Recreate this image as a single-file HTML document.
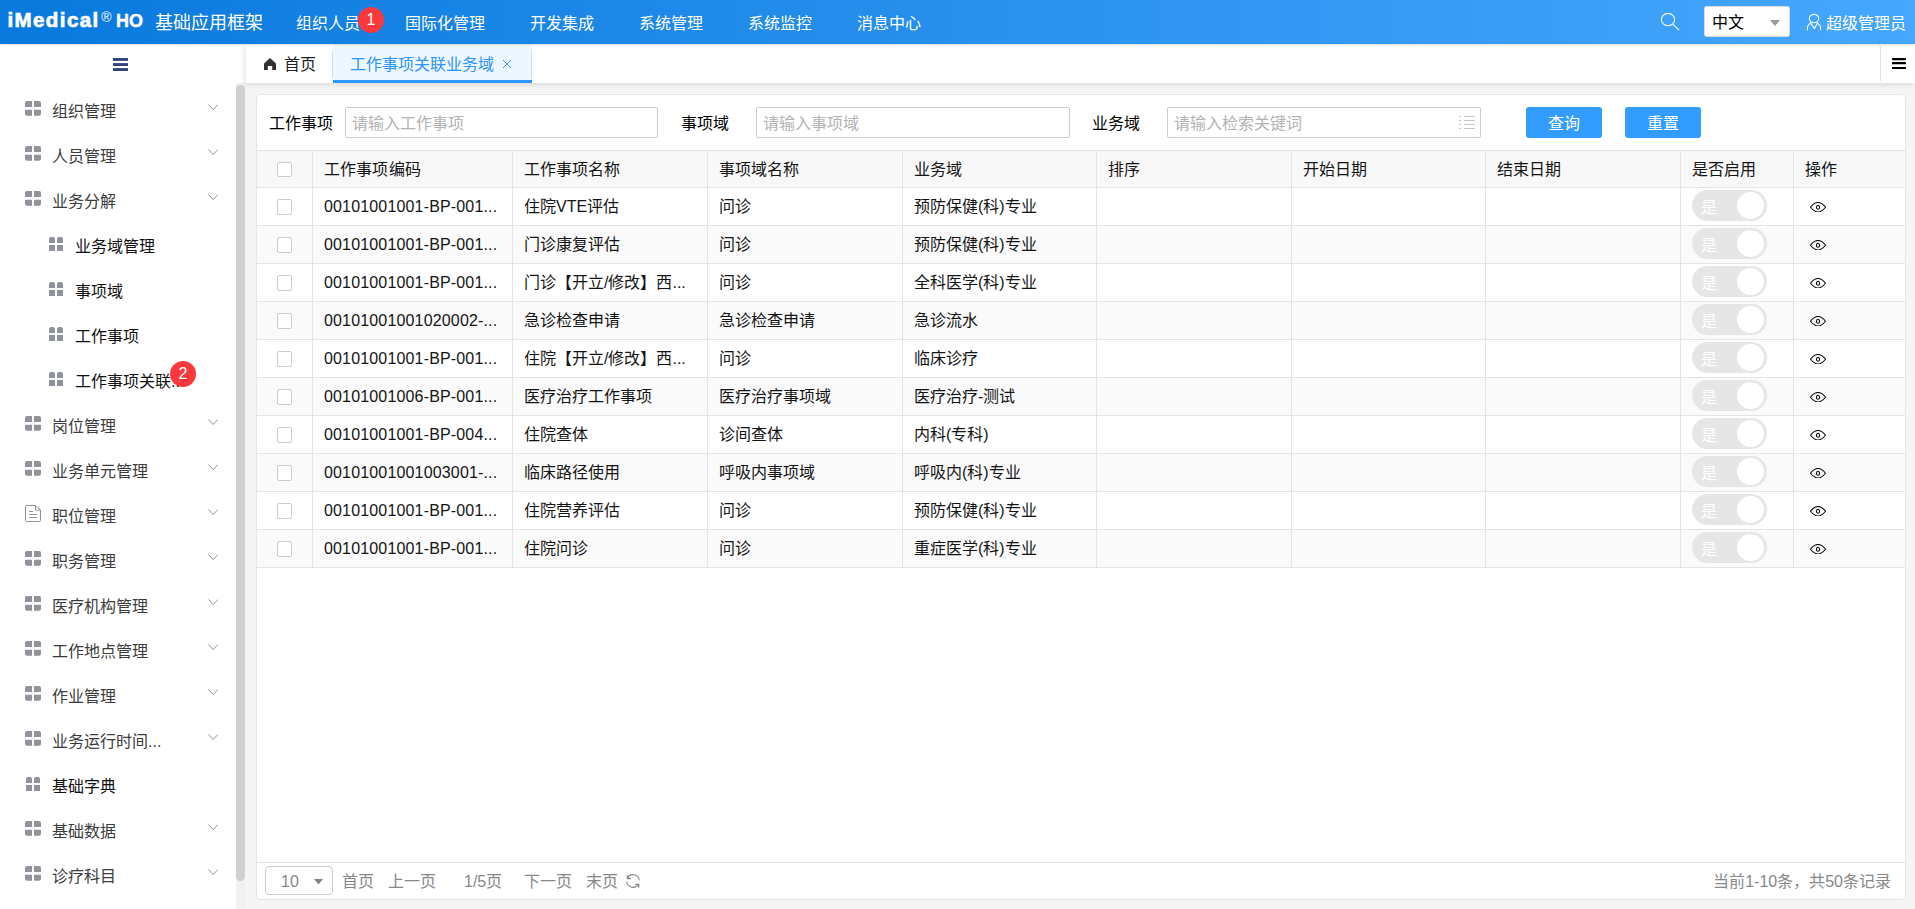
<!DOCTYPE html>
<html lang="zh-CN">
<head>
<meta charset="utf-8">
<title>iMedical HO</title>
<style>
*{box-sizing:border-box;margin:0;padding:0}
html,body{width:1915px;height:909px;overflow:hidden}
body{font-family:"Liberation Sans",sans-serif;font-size:16px;color:#000;background:#f5f5f5;position:relative}
.abs{position:absolute}
/* header */
#hdr{position:absolute;left:0;top:0;width:1915px;height:44px;background:linear-gradient(90deg,#0979dd,#46a7fe);box-shadow:0 1px 2px rgba(0,0,0,.13);z-index:5;color:#fff}
#hdr .t{position:absolute;white-space:nowrap;line-height:20px}
.nav{font-size:16px;top:13.5px}
/* sidebar */
#side{position:absolute;left:0;top:44px;width:236px;height:865px;background:#fff}
#side2{position:absolute;left:236px;top:44px;width:10px;height:39px;background:#fff}
#strack{position:absolute;left:236px;top:83px;width:9px;height:826px;background:#f1f1f1}
#sthumb{position:absolute;left:236px;top:85px;width:9px;height:796px;background:#d0d0d0;border-radius:5px}
.mi{position:absolute;left:0;width:236px;height:45px}
.mi .ic{position:absolute;left:25px;top:13px}
.mi .tx{position:absolute;left:52px;top:14.2px;line-height:20px;white-space:nowrap;color:#3c3c3c}
.mi.sub .tx,.mi.leaf .tx{color:#111}
.mi.leaf .ic{left:26px;top:14px}
.mi .ch{position:absolute;left:208px;top:15.5px}
.mi.sub .ic{left:49px;top:14px}
.mi.sub .tx{left:75px}
/* tabs */
#tabs{position:absolute;left:246px;top:44px;width:1669px;height:39px;background:#fff;box-shadow:-2px 2px 5px rgba(0,0,0,.10);border-top-left-radius:3px}
/* panel */
#panel{position:absolute;left:256px;top:94px;width:1650px;height:806px;background:#fff;border:1px solid #e6e6e6;border-radius:5px}
.lbl{position:absolute;top:114px;line-height:20px;white-space:nowrap}
.inp{position:absolute;top:107px;height:31px;border:1px solid #ccc;border-radius:2px;background:#fff;color:#b3b3b3;line-height:31px;padding-left:6px;white-space:nowrap}
.btn{position:absolute;top:107px;width:76px;height:31px;background:#339dff;border-radius:3px;color:#fff;text-align:center;line-height:33px}
/* table */
#tbl{position:absolute;left:257px;top:150px;width:1648px;color:#141414}
.row{position:absolute;left:0;width:1648px;height:38px;border-bottom:1px solid #e4e4e4;background:#fff}
.row.z{background:#fafafa}
.row.h{height:38px;border-top:1px solid #e4e4e4;background:#f8f8f8}
.c{position:absolute;top:0;height:100%;border-left:1px solid #e4e4e4;padding-left:11px;white-space:nowrap;overflow:hidden;line-height:38px}
.c0{left:0;width:55px;border-left:none;padding:0}
.c1{left:55px;width:200px;letter-spacing:.16px}
.c2{left:255px;width:195px}
.c3{left:450px;width:195px}
.c4{left:645px;width:194px}
.c5{left:839px;width:195px}
.c6{left:1034px;width:194px}
.c7{left:1228px;width:195px}
.c8{left:1423px;width:113px}
.c9{left:1536px;width:112px}
.cb{position:absolute;left:20px;top:11px;width:15px;height:15.6px;border:1px solid #ccc;border-radius:2px;background:#fff}
.sw{position:absolute;left:11px;top:2px;width:75px;height:31px;border-radius:16px;background:#e6e6e6}
.sw i{position:absolute;left:45px;top:1.6px;width:27.3px;height:27.4px;border-radius:14px;background:#fff}
.sw b{position:absolute;left:9px;top:0;line-height:35.6px;font-weight:normal;color:#fff;font-size:16px}
.eye{position:absolute;left:16px;top:13.6px}
/* footer */
#foot{position:absolute;left:257px;top:862px;width:1648px;height:37px;border-top:1px solid #e4e4e4;color:#888}
#foot .t{position:absolute;top:9px;line-height:20px;white-space:nowrap}
</style>
</head>
<body>
<!-- sidebar -->
<div id="side">
<svg class="abs" style="left:113px;top:14px" width="15" height="13" viewBox="0 0 15 13"><g fill="#30467a"><rect x="0" y="0" width="15" height="2.900"/><rect x="0" y="5.100" width="15" height="2.900"/><rect x="0" y="10.100" width="15" height="2.900"/></g></svg>
<div class="mi" style="top:44px"><svg class="ic" width="16" height="15" viewBox="0 0 16 15"><g fill="#8f939c"><path d="M2 0h5v6H0V2a2 2 0 0 1 2-2z"/><path d="M9 0h5a2 2 0 0 1 2 2v4H9z"/><path d="M0 8.800h7v5.900H2a2 2 0 0 1-2-2z"/><path d="M9 8.800h7v3.900a2 2 0 0 1-2 2H9z"/></g></svg><span class="tx">组织管理</span><svg class="ch" width="10.400" height="6" viewBox="0 0 11 6" preserveAspectRatio="none"><path d="M0.5 0.5l5 5 5-5" fill="none" stroke="#8a8f99" stroke-width="1"/></svg></div>
<div class="mi" style="top:89px"><svg class="ic" width="16" height="15" viewBox="0 0 16 15"><g fill="#8f939c"><path d="M2 0h5v6H0V2a2 2 0 0 1 2-2z"/><path d="M9 0h5a2 2 0 0 1 2 2v4H9z"/><path d="M0 8.800h7v5.900H2a2 2 0 0 1-2-2z"/><path d="M9 8.800h7v3.900a2 2 0 0 1-2 2H9z"/></g></svg><span class="tx">人员管理</span><svg class="ch" width="10.400" height="6" viewBox="0 0 11 6" preserveAspectRatio="none"><path d="M0.5 0.5l5 5 5-5" fill="none" stroke="#8a8f99" stroke-width="1"/></svg></div>
<div class="mi" style="top:134px"><svg class="ic" width="16" height="15" viewBox="0 0 16 15"><g fill="#8f939c"><path d="M2 0h5v6H0V2a2 2 0 0 1 2-2z"/><path d="M9 0h5a2 2 0 0 1 2 2v4H9z"/><path d="M0 8.800h7v5.900H2a2 2 0 0 1-2-2z"/><path d="M9 8.800h7v3.900a2 2 0 0 1-2 2H9z"/></g></svg><span class="tx">业务分解</span><svg class="ch" width="10.400" height="6" viewBox="0 0 11 6" preserveAspectRatio="none"><path d="M0.5 0.5l5 5 5-5" fill="none" stroke="#8a8f99" stroke-width="1"/></svg></div>
<div class="mi sub" style="top:179px"><svg class="ic" width="14" height="14" viewBox="0 0 14 14"><g fill="#8f939c"><path d="M0 6V2a2 2 0 0 1 2-2h2a2 2 0 0 1 2 2v4z"/><path d="M8 6V2a2 2 0 0 1 2-2h2a2 2 0 0 1 2 2v4z"/><path d="M0 8h6v6H0z"/><path d="M8 8h6v6H8z"/></g></svg><span class="tx">业务域管理</span></div>
<div class="mi sub" style="top:224px"><svg class="ic" width="14" height="14" viewBox="0 0 14 14"><g fill="#8f939c"><path d="M0 6V2a2 2 0 0 1 2-2h2a2 2 0 0 1 2 2v4z"/><path d="M8 6V2a2 2 0 0 1 2-2h2a2 2 0 0 1 2 2v4z"/><path d="M0 8h6v6H0z"/><path d="M8 8h6v6H8z"/></g></svg><span class="tx">事项域</span></div>
<div class="mi sub" style="top:269px"><svg class="ic" width="14" height="14" viewBox="0 0 14 14"><g fill="#8f939c"><path d="M0 6V2a2 2 0 0 1 2-2h2a2 2 0 0 1 2 2v4z"/><path d="M8 6V2a2 2 0 0 1 2-2h2a2 2 0 0 1 2 2v4z"/><path d="M0 8h6v6H0z"/><path d="M8 8h6v6H8z"/></g></svg><span class="tx">工作事项</span></div>
<div class="mi sub" style="top:314px"><svg class="ic" width="14" height="14" viewBox="0 0 14 14"><g fill="#8f939c"><path d="M0 6V2a2 2 0 0 1 2-2h2a2 2 0 0 1 2 2v4z"/><path d="M8 6V2a2 2 0 0 1 2-2h2a2 2 0 0 1 2 2v4z"/><path d="M0 8h6v6H0z"/><path d="M8 8h6v6H8z"/></g></svg><span class="tx">工作事项关联...</span></div>
<div class="mi" style="top:359px"><svg class="ic" width="16" height="15" viewBox="0 0 16 15"><g fill="#8f939c"><path d="M2 0h5v6H0V2a2 2 0 0 1 2-2z"/><path d="M9 0h5a2 2 0 0 1 2 2v4H9z"/><path d="M0 8.800h7v5.900H2a2 2 0 0 1-2-2z"/><path d="M9 8.800h7v3.900a2 2 0 0 1-2 2H9z"/></g></svg><span class="tx">岗位管理</span><svg class="ch" width="10.400" height="6" viewBox="0 0 11 6" preserveAspectRatio="none"><path d="M0.5 0.5l5 5 5-5" fill="none" stroke="#8a8f99" stroke-width="1"/></svg></div>
<div class="mi" style="top:404px"><svg class="ic" width="16" height="15" viewBox="0 0 16 15"><g fill="#8f939c"><path d="M2 0h5v6H0V2a2 2 0 0 1 2-2z"/><path d="M9 0h5a2 2 0 0 1 2 2v4H9z"/><path d="M0 8.800h7v5.900H2a2 2 0 0 1-2-2z"/><path d="M9 8.800h7v3.900a2 2 0 0 1-2 2H9z"/></g></svg><span class="tx">业务单元管理</span><svg class="ch" width="10.400" height="6" viewBox="0 0 11 6" preserveAspectRatio="none"><path d="M0.5 0.5l5 5 5-5" fill="none" stroke="#8a8f99" stroke-width="1"/></svg></div>
<div class="mi" style="top:449px"><svg class="ic" style="top:12px" width="16" height="17" viewBox="0 0 16 17"><g fill="none" stroke="#8d919b" stroke-width="1"><path d="M1.500 0.500h9l5 4.600v10.400a1 1 0 0 1-1 1h-13a1 1 0 0 1-1-1v-14a1 1 0 0 1 1-1z"/><path d="M10.500 0.500v4.600h5"/><path d="M4 6.500h4M4 9.500h8M4 12.500h8"/></g></svg><span class="tx">职位管理</span><svg class="ch" width="10.400" height="6" viewBox="0 0 11 6" preserveAspectRatio="none"><path d="M0.5 0.5l5 5 5-5" fill="none" stroke="#8a8f99" stroke-width="1"/></svg></div>
<div class="mi" style="top:494px"><svg class="ic" width="16" height="15" viewBox="0 0 16 15"><g fill="#8f939c"><path d="M2 0h5v6H0V2a2 2 0 0 1 2-2z"/><path d="M9 0h5a2 2 0 0 1 2 2v4H9z"/><path d="M0 8.800h7v5.900H2a2 2 0 0 1-2-2z"/><path d="M9 8.800h7v3.900a2 2 0 0 1-2 2H9z"/></g></svg><span class="tx">职务管理</span><svg class="ch" width="10.400" height="6" viewBox="0 0 11 6" preserveAspectRatio="none"><path d="M0.5 0.5l5 5 5-5" fill="none" stroke="#8a8f99" stroke-width="1"/></svg></div>
<div class="mi" style="top:539px"><svg class="ic" width="16" height="15" viewBox="0 0 16 15"><g fill="#8f939c"><path d="M2 0h5v6H0V2a2 2 0 0 1 2-2z"/><path d="M9 0h5a2 2 0 0 1 2 2v4H9z"/><path d="M0 8.800h7v5.900H2a2 2 0 0 1-2-2z"/><path d="M9 8.800h7v3.900a2 2 0 0 1-2 2H9z"/></g></svg><span class="tx">医疗机构管理</span><svg class="ch" width="10.400" height="6" viewBox="0 0 11 6" preserveAspectRatio="none"><path d="M0.5 0.5l5 5 5-5" fill="none" stroke="#8a8f99" stroke-width="1"/></svg></div>
<div class="mi" style="top:584px"><svg class="ic" width="16" height="15" viewBox="0 0 16 15"><g fill="#8f939c"><path d="M2 0h5v6H0V2a2 2 0 0 1 2-2z"/><path d="M9 0h5a2 2 0 0 1 2 2v4H9z"/><path d="M0 8.800h7v5.900H2a2 2 0 0 1-2-2z"/><path d="M9 8.800h7v3.900a2 2 0 0 1-2 2H9z"/></g></svg><span class="tx">工作地点管理</span><svg class="ch" width="10.400" height="6" viewBox="0 0 11 6" preserveAspectRatio="none"><path d="M0.5 0.5l5 5 5-5" fill="none" stroke="#8a8f99" stroke-width="1"/></svg></div>
<div class="mi" style="top:629px"><svg class="ic" width="16" height="15" viewBox="0 0 16 15"><g fill="#8f939c"><path d="M2 0h5v6H0V2a2 2 0 0 1 2-2z"/><path d="M9 0h5a2 2 0 0 1 2 2v4H9z"/><path d="M0 8.800h7v5.900H2a2 2 0 0 1-2-2z"/><path d="M9 8.800h7v3.900a2 2 0 0 1-2 2H9z"/></g></svg><span class="tx">作业管理</span><svg class="ch" width="10.400" height="6" viewBox="0 0 11 6" preserveAspectRatio="none"><path d="M0.5 0.5l5 5 5-5" fill="none" stroke="#8a8f99" stroke-width="1"/></svg></div>
<div class="mi" style="top:674px"><svg class="ic" width="16" height="15" viewBox="0 0 16 15"><g fill="#8f939c"><path d="M2 0h5v6H0V2a2 2 0 0 1 2-2z"/><path d="M9 0h5a2 2 0 0 1 2 2v4H9z"/><path d="M0 8.800h7v5.900H2a2 2 0 0 1-2-2z"/><path d="M9 8.800h7v3.900a2 2 0 0 1-2 2H9z"/></g></svg><span class="tx">业务运行时间...</span><svg class="ch" width="10.400" height="6" viewBox="0 0 11 6" preserveAspectRatio="none"><path d="M0.5 0.5l5 5 5-5" fill="none" stroke="#8a8f99" stroke-width="1"/></svg></div>
<div class="mi leaf" style="top:719px"><svg class="ic" width="14" height="14" viewBox="0 0 14 14"><g fill="#8f939c"><path d="M0 6V2a2 2 0 0 1 2-2h2a2 2 0 0 1 2 2v4z"/><path d="M8 6V2a2 2 0 0 1 2-2h2a2 2 0 0 1 2 2v4z"/><path d="M0 8h6v6H0z"/><path d="M8 8h6v6H8z"/></g></svg><span class="tx">基础字典</span></div>
<div class="mi" style="top:764px"><svg class="ic" width="16" height="15" viewBox="0 0 16 15"><g fill="#8f939c"><path d="M2 0h5v6H0V2a2 2 0 0 1 2-2z"/><path d="M9 0h5a2 2 0 0 1 2 2v4H9z"/><path d="M0 8.800h7v5.900H2a2 2 0 0 1-2-2z"/><path d="M9 8.800h7v3.900a2 2 0 0 1-2 2H9z"/></g></svg><span class="tx">基础数据</span><svg class="ch" width="10.400" height="6" viewBox="0 0 11 6" preserveAspectRatio="none"><path d="M0.5 0.5l5 5 5-5" fill="none" stroke="#8a8f99" stroke-width="1"/></svg></div>
<div class="mi" style="top:809px"><svg class="ic" width="16" height="15" viewBox="0 0 16 15"><g fill="#8f939c"><path d="M2 0h5v6H0V2a2 2 0 0 1 2-2z"/><path d="M9 0h5a2 2 0 0 1 2 2v4H9z"/><path d="M0 8.800h7v5.900H2a2 2 0 0 1-2-2z"/><path d="M9 8.800h7v3.900a2 2 0 0 1-2 2H9z"/></g></svg><span class="tx">诊疗科目</span><svg class="ch" width="10.400" height="6" viewBox="0 0 11 6" preserveAspectRatio="none"><path d="M0.5 0.5l5 5 5-5" fill="none" stroke="#8a8f99" stroke-width="1"/></svg></div>
<div class="abs" style="left:170px;top:317px;width:26px;height:26px;border-radius:13px;background:#fb383c;color:#fff;text-align:center;line-height:25px;font-size:16px">2</div>
</div>
<div id="side2"></div>
<div id="strack"></div>
<div id="sthumb"></div>
<!-- tabs -->
<div id="tabs">
<svg class="abs" style="left:18px;top:14px" width="12" height="12" viewBox="0 0 12 12"><path d="M6 0L12 5.400V12H8.200V8H3.800V12H0V5.400z" fill="#2f3033"/></svg>
<span class="abs" style="left:38px;top:11px;line-height:20px;color:#222">首页</span>
<div class="abs" style="left:86px;top:7px;width:1px;height:27px;background:#ddd"></div>
<div class="abs" style="left:87px;top:0;width:199px;height:39px;background:#ecf7ff;border-bottom:3px solid #2e98ff"></div>
<span class="abs" style="left:104px;top:11px;line-height:20px;color:#2c94fb;white-space:nowrap">工作事项关联业务域</span>
<svg class="abs" style="left:256px;top:15px" width="10" height="10" viewBox="0 0 10 10"><path d="M1 1l8 8M9 1l-8 8" stroke="#2e98ff" stroke-width="1" fill="none"/></svg>
<div class="abs" style="left:285px;top:7px;width:1px;height:27px;background:#ddd"></div>
<div class="abs" style="left:1625px;top:0;width:10px;height:37px;border-right:1px solid #e0e0e0;border-top-right-radius:4px"></div>
<svg class="abs" style="left:1646px;top:14px" width="14" height="11" viewBox="0 0 14 11"><g fill="#000"><rect x="0" y="0" width="14" height="2.200" rx="0.600"/><rect x="0" y="4.100" width="14" height="2.200" rx="0.600"/><rect x="0" y="8.900" width="14" height="2.200" rx="0.600"/></g></svg>
</div>
<!-- panel -->
<div id="panel"></div>
<span class="lbl" style="left:269px">工作事项</span>
<div class="inp" style="left:345px;width:313px">请输入工作事项</div>
<span class="lbl" style="left:681px">事项域</span>
<div class="inp" style="left:756px;width:314px">请输入事项域</div>
<span class="lbl" style="left:1092px">业务域</span>
<div class="inp" style="left:1167px;width:314px">请输入检索关键词<svg class="abs" style="left:291px;top:7px" width="17" height="15" viewBox="0 0 17 15"><g fill="none" stroke="#c3c7cf" stroke-width="1.2"><path d="M5 1.500h11M5 5.500h11M5 9.500h11M5 13.500h11"/><path d="M0 1.500h2M0 5.500h2M0 9.500h2M0 13.500h2"/></g></svg></div>
<div class="btn" style="left:1526px">查询</div>
<div class="btn" style="left:1625px">重置</div>

<div id="tbl">
<div class="row h" style="top:0"><div class="c c0"><span class="cb" style="top:11px;height:15px"></span></div><div class="c c1">工作事项编码</div><div class="c c2">工作事项名称</div><div class="c c3">事项域名称</div><div class="c c4">业务域</div><div class="c c5">排序</div><div class="c c6">开始日期</div><div class="c c7">结束日期</div><div class="c c8">是否启用</div><div class="c c9">操作</div></div>
<div class="row" style="top:38px"><div class="c c0"><span class="cb"></span></div><div class="c c1">00101001001-BP-001...</div><div class="c c2">住院VTE评估</div><div class="c c3">问诊</div><div class="c c4">预防保健(科)专业</div><div class="c c5"></div><div class="c c6"></div><div class="c c7"></div><div class="c c8"><span class="sw"><b>是</b><i></i></span></div><div class="c c9"><svg class="eye" width="16" height="10.5" viewBox="0 0 16 10.5"><g fill="none" stroke="#000" stroke-width="1.05"><path d="M0.500 5.250C3 2 5.200 0.550 8 0.550S13 2 15.500 5.250C13 8.500 10.800 9.950 8 9.950S3 8.500 0.500 5.250z"/><ellipse cx="8" cy="5.250" rx="1.550" ry="2.050"/></g></svg></div></div>
<div class="row z" style="top:76px"><div class="c c0"><span class="cb"></span></div><div class="c c1">00101001001-BP-001...</div><div class="c c2">门诊康复评估</div><div class="c c3">问诊</div><div class="c c4">预防保健(科)专业</div><div class="c c5"></div><div class="c c6"></div><div class="c c7"></div><div class="c c8"><span class="sw"><b>是</b><i></i></span></div><div class="c c9"><svg class="eye" width="16" height="10.5" viewBox="0 0 16 10.5"><g fill="none" stroke="#000" stroke-width="1.05"><path d="M0.500 5.250C3 2 5.200 0.550 8 0.550S13 2 15.500 5.250C13 8.500 10.800 9.950 8 9.950S3 8.500 0.500 5.250z"/><ellipse cx="8" cy="5.250" rx="1.550" ry="2.050"/></g></svg></div></div>
<div class="row" style="top:114px"><div class="c c0"><span class="cb"></span></div><div class="c c1">00101001001-BP-001...</div><div class="c c2">门诊【开立/修改】西...</div><div class="c c3">问诊</div><div class="c c4">全科医学(科)专业</div><div class="c c5"></div><div class="c c6"></div><div class="c c7"></div><div class="c c8"><span class="sw"><b>是</b><i></i></span></div><div class="c c9"><svg class="eye" width="16" height="10.5" viewBox="0 0 16 10.5"><g fill="none" stroke="#000" stroke-width="1.05"><path d="M0.500 5.250C3 2 5.200 0.550 8 0.550S13 2 15.500 5.250C13 8.500 10.800 9.950 8 9.950S3 8.500 0.500 5.250z"/><ellipse cx="8" cy="5.250" rx="1.550" ry="2.050"/></g></svg></div></div>
<div class="row z" style="top:152px"><div class="c c0"><span class="cb"></span></div><div class="c c1">00101001001020002-...</div><div class="c c2">急诊检查申请</div><div class="c c3">急诊检查申请</div><div class="c c4">急诊流水</div><div class="c c5"></div><div class="c c6"></div><div class="c c7"></div><div class="c c8"><span class="sw"><b>是</b><i></i></span></div><div class="c c9"><svg class="eye" width="16" height="10.5" viewBox="0 0 16 10.5"><g fill="none" stroke="#000" stroke-width="1.05"><path d="M0.500 5.250C3 2 5.200 0.550 8 0.550S13 2 15.500 5.250C13 8.500 10.800 9.950 8 9.950S3 8.500 0.500 5.250z"/><ellipse cx="8" cy="5.250" rx="1.550" ry="2.050"/></g></svg></div></div>
<div class="row" style="top:190px"><div class="c c0"><span class="cb"></span></div><div class="c c1">00101001001-BP-001...</div><div class="c c2">住院【开立/修改】西...</div><div class="c c3">问诊</div><div class="c c4">临床诊疗</div><div class="c c5"></div><div class="c c6"></div><div class="c c7"></div><div class="c c8"><span class="sw"><b>是</b><i></i></span></div><div class="c c9"><svg class="eye" width="16" height="10.5" viewBox="0 0 16 10.5"><g fill="none" stroke="#000" stroke-width="1.05"><path d="M0.500 5.250C3 2 5.200 0.550 8 0.550S13 2 15.500 5.250C13 8.500 10.800 9.950 8 9.950S3 8.500 0.500 5.250z"/><ellipse cx="8" cy="5.250" rx="1.550" ry="2.050"/></g></svg></div></div>
<div class="row z" style="top:228px"><div class="c c0"><span class="cb"></span></div><div class="c c1">00101001006-BP-001...</div><div class="c c2">医疗治疗工作事项</div><div class="c c3">医疗治疗事项域</div><div class="c c4">医疗治疗-测试</div><div class="c c5"></div><div class="c c6"></div><div class="c c7"></div><div class="c c8"><span class="sw"><b>是</b><i></i></span></div><div class="c c9"><svg class="eye" width="16" height="10.5" viewBox="0 0 16 10.5"><g fill="none" stroke="#000" stroke-width="1.05"><path d="M0.500 5.250C3 2 5.200 0.550 8 0.550S13 2 15.500 5.250C13 8.500 10.800 9.950 8 9.950S3 8.500 0.500 5.250z"/><ellipse cx="8" cy="5.250" rx="1.550" ry="2.050"/></g></svg></div></div>
<div class="row" style="top:266px"><div class="c c0"><span class="cb"></span></div><div class="c c1">00101001001-BP-004...</div><div class="c c2">住院查体</div><div class="c c3">诊间查体</div><div class="c c4">内科(专科)</div><div class="c c5"></div><div class="c c6"></div><div class="c c7"></div><div class="c c8"><span class="sw"><b>是</b><i></i></span></div><div class="c c9"><svg class="eye" width="16" height="10.5" viewBox="0 0 16 10.5"><g fill="none" stroke="#000" stroke-width="1.05"><path d="M0.500 5.250C3 2 5.200 0.550 8 0.550S13 2 15.500 5.250C13 8.500 10.800 9.950 8 9.950S3 8.500 0.500 5.250z"/><ellipse cx="8" cy="5.250" rx="1.550" ry="2.050"/></g></svg></div></div>
<div class="row z" style="top:304px"><div class="c c0"><span class="cb"></span></div><div class="c c1">00101001001003001-...</div><div class="c c2">临床路径使用</div><div class="c c3">呼吸内事项域</div><div class="c c4">呼吸内(科)专业</div><div class="c c5"></div><div class="c c6"></div><div class="c c7"></div><div class="c c8"><span class="sw"><b>是</b><i></i></span></div><div class="c c9"><svg class="eye" width="16" height="10.5" viewBox="0 0 16 10.5"><g fill="none" stroke="#000" stroke-width="1.05"><path d="M0.500 5.250C3 2 5.200 0.550 8 0.550S13 2 15.500 5.250C13 8.500 10.800 9.950 8 9.950S3 8.500 0.500 5.250z"/><ellipse cx="8" cy="5.250" rx="1.550" ry="2.050"/></g></svg></div></div>
<div class="row" style="top:342px"><div class="c c0"><span class="cb"></span></div><div class="c c1">00101001001-BP-001...</div><div class="c c2">住院营养评估</div><div class="c c3">问诊</div><div class="c c4">预防保健(科)专业</div><div class="c c5"></div><div class="c c6"></div><div class="c c7"></div><div class="c c8"><span class="sw"><b>是</b><i></i></span></div><div class="c c9"><svg class="eye" width="16" height="10.5" viewBox="0 0 16 10.5"><g fill="none" stroke="#000" stroke-width="1.05"><path d="M0.500 5.250C3 2 5.200 0.550 8 0.550S13 2 15.500 5.250C13 8.500 10.800 9.950 8 9.950S3 8.500 0.500 5.250z"/><ellipse cx="8" cy="5.250" rx="1.550" ry="2.050"/></g></svg></div></div>
<div class="row z" style="top:380px"><div class="c c0"><span class="cb"></span></div><div class="c c1">00101001001-BP-001...</div><div class="c c2">住院问诊</div><div class="c c3">问诊</div><div class="c c4">重症医学(科)专业</div><div class="c c5"></div><div class="c c6"></div><div class="c c7"></div><div class="c c8"><span class="sw"><b>是</b><i></i></span></div><div class="c c9"><svg class="eye" width="16" height="10.5" viewBox="0 0 16 10.5"><g fill="none" stroke="#000" stroke-width="1.05"><path d="M0.500 5.250C3 2 5.200 0.550 8 0.550S13 2 15.500 5.250C13 8.500 10.800 9.950 8 9.950S3 8.500 0.500 5.250z"/><ellipse cx="8" cy="5.250" rx="1.550" ry="2.050"/></g></svg></div></div>
</div>
<div id="foot">
<div class="abs" style="left:8px;top:3px;width:68px;height:29px;border:1px solid #ccc;border-radius:4px;background:#fff"></div>
<span class="t" style="left:24px">10</span>
<svg class="abs" style="left:57px;top:15.500px" width="9" height="5.500" viewBox="0 0 10 6"><path d="M0 0h10L5 6z" fill="#858585"/></svg>
<span class="t" style="left:85px">首页</span>
<span class="t" style="left:131px">上一页</span>
<span class="t" style="left:207px">1/5页</span>
<span class="t" style="left:267px">下一页</span>
<span class="t" style="left:329px">末页</span>
<svg class="abs" style="left:369px;top:11px" width="14" height="14" viewBox="0 0 14 14"><g fill="none" stroke="#888" stroke-width="1.050"><path d="M1.540 3.850A6.300 6.300 0 0 1 13.280 6.450"/><path d="M0.720 7.550A6.300 6.300 0 0 0 12.460 10.150"/><path d="M1.300 0.900v3.700h3.700"/><path d="M9.100 10.150h3.700v3.700"/></g><path d="M1.300 1.800v2.800h2.800z" fill="#888"/><path d="M12.800 13v-2.850h-2.850z" fill="#888"/></svg>
<span class="t" style="right:14px">当前1-10条，共50条记录</span>
</div>
<!-- header -->
<div id="hdr">
<span class="t" style="left:7.5px;top:8px;font-size:20.5px;font-weight:bold;letter-spacing:1.4px;line-height:24px;-webkit-text-stroke:0.7px #fff" id="logo1">iMedical</span>
<span class="t" style="left:101.3px;top:10px;font-size:14px;line-height:14px">®</span>
<span class="t" style="left:116px;top:11px;font-size:18px;font-weight:bold;line-height:20px;-webkit-text-stroke:0.4px #fff" id="logo2">HO</span>
<span class="t" style="left:154.5px;top:11.7px;font-size:18px;line-height:22px">基础应用框架</span>
<span class="t nav" style="left:296px">组织人员</span>
<span class="t nav" style="left:405px">国际化管理</span>
<span class="t nav" style="left:530px">开发集成</span>
<span class="t nav" style="left:639px">系统管理</span>
<span class="t nav" style="left:748px">系统监控</span>
<span class="t nav" style="left:857px">消息中心</span>
<div class="abs" style="left:358px;top:7px;width:26px;height:26px;border-radius:13px;background:#fb383c;color:#fff;text-align:center;line-height:25px;font-size:16px">1</div>
<svg class="abs" style="left:1659px;top:11px" width="22" height="21" viewBox="0 0 22 21"><g fill="none" stroke="#fff" stroke-width="1.1"><ellipse cx="9" cy="8.500" rx="6.600" ry="6.100"/><path d="M13.8 13.2l6.2 6"/></g></svg>
<div class="abs" style="left:1704px;top:6px;width:86px;height:30.600px;background:#fff;border:1px solid #e0d9d2;border-radius:2.500px;color:#000;line-height:31px;padding-left:7px;font-size:16px">中文<svg class="abs" style="left:65px;top:13px" width="10" height="6" viewBox="0 0 11 7" preserveAspectRatio="none"><path d="M0 0h11L5.5 7z" fill="#999"/></svg></div>
<svg class="abs" style="left:1806px;top:13px" width="16" height="18" viewBox="0 0 16 18"><g fill="none" stroke="#fff" stroke-width="1.1" stroke-linejoin="miter"><ellipse cx="8.050" cy="5.550" rx="4.650" ry="4.200"/><path d="M1.500 17.200V13.400L4.450 10L8.400 15.600L11.600 10L14.550 13.400V17.200"/></g></svg>
<span class="t" style="left:1826px;top:13.5px;font-size:16px">超级管理员</span>
</div>
</body>
</html>
